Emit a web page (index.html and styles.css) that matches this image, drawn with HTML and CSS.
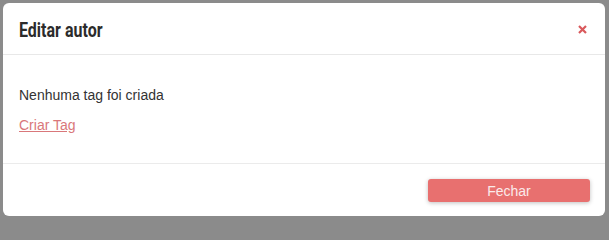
FILE: index.html
```html
<!DOCTYPE html>
<html lang="pt">
<head>
<meta charset="utf-8">
<title>Editar autor</title>
<link rel="stylesheet" href="styles.css">
</head>
<body>
<div class="overlay">
  <div class="modal">
    <div class="modal-header">
      <h4 class="modal-title"><span class="title-text">Editar autor</span></h4>
      <button class="close" type="button" aria-label="Fechar">
        <svg width="9" height="9" viewBox="0 0 9 9"><path d="M1 1 L8 8 M8 1 L1 8" stroke="#d9595c" stroke-width="2.2" stroke-linecap="butt"/></svg>
      </button>
    </div>
    <div class="modal-body">
      <p class="empty">Nenhuma tag foi criada</p>
      <a class="create-link" href="#">Criar Tag</a>
    </div>
    <div class="modal-footer">
      <button class="btn-close" type="button">Fechar</button>
    </div>
  </div>
</div>
</body>
</html>
```

FILE: styles.css
```css
html, body {
  margin: 0;
  padding: 0;
  background: #8b8b8b;
}
.overlay {
  padding: 3px 4px 4px 3px;
  height: 220px;
  box-sizing: border-box;
}
.modal {
  background: #fff;
  border-radius: 6px;
  height: 213px;
  display: flex;
  flex-direction: column;
  font-family: "Liberation Sans", Arial, sans-serif;
}
.modal-header {
  height: 51px;
  border-bottom: 1px solid #e8e8e8;
  display: flex;
  align-items: center;
  justify-content: space-between;
  padding: 0 16px 0 16px;
}
.modal-title {
  margin: 0;
  font-family: Roboto, "Liberation Sans", sans-serif;
  font-weight: 700;
  font-size: 20px;
  color: #2b2b2b;
  line-height: 1;
  padding-top: 2px;
}
.title-text {
  display: inline-block;
  transform: scaleX(0.8);
  transform-origin: left center;
}
.close {
  border: 0;
  background: none;
  padding: 0;
  margin: 0 2px -2px 0;
  width: 9px;
  height: 9px;
  display: flex;
  cursor: pointer;
}
.modal-body {
  flex: 1;
  padding: 32px 16px 0 16px;
  border-bottom: 1px solid #ebebeb;
}
.empty {
  margin: 0;
  font-size: 14px;
  line-height: 17px;
  color: #333;
}
.create-link {
  display: inline-block;
  margin-top: 13px;
  font-size: 14px;
  line-height: 17px;
  color: #d9777a;
  text-decoration: underline;
}
.modal-footer {
  height: 52px;
  display: flex;
  justify-content: flex-end;
  align-items: flex-start;
  padding: 15px 15px 0 0;
  box-sizing: border-box;
}
.btn-close {
  width: 162px;
  height: 23px;
  border: 0;
  border-radius: 3px;
  background: #e8706f;
  color: #fbeaea;
  font-family: "Liberation Sans", Arial, sans-serif;
  font-size: 14px;
  box-shadow: 0 1px 4px rgba(0,0,0,0.25);
  cursor: pointer;
}
```
